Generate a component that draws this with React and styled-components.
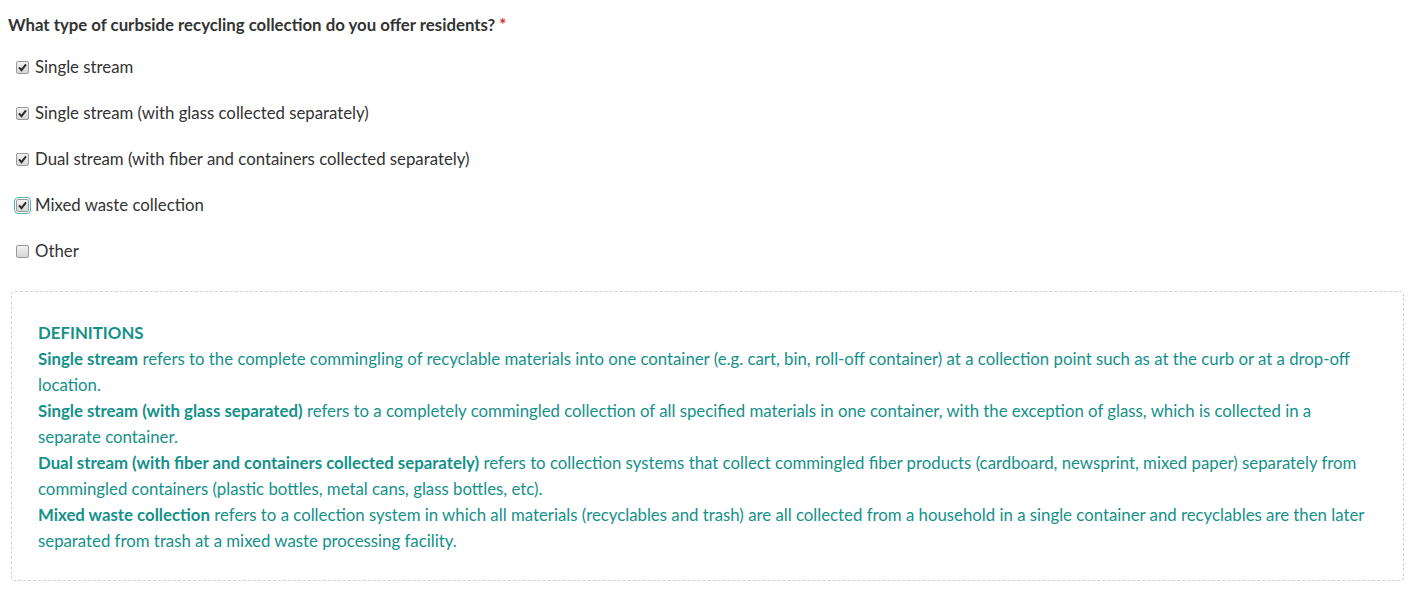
import React from 'react';
import styled, { createGlobalStyle } from 'styled-components';

const GlobalStyle = createGlobalStyle`
  body {
    margin: 0;
    background: #fff;
    font-family: Lato, "Open Sans", "Liberation Sans", sans-serif;
    color: #333;
  }
`;

const Page = styled.div`
  padding: 13px 10px 0 8px;
`;

const Question = styled.div`
  font-size: 16.8px;
  font-weight: 700;
  line-height: 24px;
  color: #333;
`;

const Star = styled.span`
  color: #e02b2b;
  margin-left: 4px;
`;

const Options = styled.div`
  display: flex;
  flex-direction: column;
  gap: 22px;
  margin-top: 18px;
  padding-left: 8px;
`;

const Option = styled.label`
  display: flex;
  align-items: center;
  gap: 6px;
  font-size: 16.8px;
  line-height: 24px;
  color: #333;
`;

const Box = styled.span`
  width: 13px;
  height: 13px;
  box-sizing: border-box;
  border: 1px solid #9a9a9a;
  border-radius: 2px;
  background: linear-gradient(#f2f2f2, #d6d6d6);
  display: flex;
  align-items: center;
  justify-content: center;
  outline: ${p => (p.$focus ? '1px solid #4fb8ae' : 'none')};
  outline-offset: 1px;
`;

const Definitions = styled.div`
  margin-top: 28px;
  margin-left: 3px;
  border: 1px dashed #d2d2d2;
  border-radius: 4px;
  padding: 28px 30px 26px 26px;
  color: #14918a;
  font-size: 16.8px;
  line-height: 26px;
`;

const Title = styled.div`
  font-weight: 700;
`;

const Term = styled.b`
  font-weight: 700;
`;

function Check({ checked, focus }) {
  return (
    <Box $focus={focus}>
      {checked && (
        <svg width="9" height="9" viewBox="0 0 9 9">
          <path d="M1 4.4 L3.5 7.2 L8 1.4" fill="none" stroke="#2b2b2b" strokeWidth="2" />
        </svg>
      )}
    </Box>
  );
}

const options = [
  { label: 'Single stream', checked: true },
  { label: 'Single stream (with glass collected separately)', checked: true },
  { label: 'Dual stream (with fiber and containers collected separately)', checked: true },
  { label: 'Mixed waste collection', checked: true, focus: true },
  { label: 'Other', checked: false },
];

export default function App() {
  return (
    <Page>
      <GlobalStyle />
      <Question>
        What type of curbside recycling collection do you offer residents?<Star>*</Star>
      </Question>
      <Options>
        {options.map(o => (
          <Option key={o.label}>
            <Check checked={o.checked} focus={o.focus} />
            {o.label}
          </Option>
        ))}
      </Options>
      <Definitions>
        <Title>DEFINITIONS</Title>
        <div>
          <Term>Single stream</Term> refers to the complete commingling of recyclable materials into one container (e.g. cart, bin, roll-off container) at a collection point such as at the curb or at a drop-off location.
        </div>
        <div>
          <Term>Single stream (with glass separated)</Term> refers to a completely commingled collection of all specified materials in one container, with the exception of glass, which is collected in a separate container.
        </div>
        <div>
          <Term>Dual stream (with fiber and containers collected separately)</Term> refers to collection systems that collect commingled fiber products (cardboard, newsprint, mixed paper) separately from commingled containers (plastic bottles, metal cans, glass bottles, etc).
        </div>
        <div>
          <Term>Mixed waste collection</Term> refers to a collection system in which all materials (recyclables and trash) are all collected from a household in a single container and recyclables are then later separated from trash at a mixed waste processing facility.
        </div>
      </Definitions>
    </Page>
  );
}
